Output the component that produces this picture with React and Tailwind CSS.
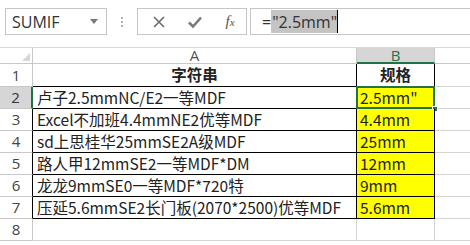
import React from 'react';

const rows = [
    { a: '卢子2.5mmNC/E2一等MDF', b: '2.5mm"' },
    { a: 'Excel不加班4.4mmNE2优等MDF', b: '4.4mm' },
    { a: 'sd上思桂华25mmSE2A级MDF', b: '25mm' },
    { a: '路人甲12mmSE2一等MDF*DM', b: '12mm' },
    { a: '龙龙9mmSE0一等MDF*720特', b: '9mm' },
    { a: '压延5.6mmSE2长门板(2070*2500)优等MDF', b: '5.6mm' },
];

const cjk = { fontFamily: '"Noto Sans CJK SC", "Noto Sans", sans-serif' };
const ui = { fontFamily: '"Open Sans", "Noto Sans", sans-serif' };

const App = () => {
    return (
        <div className="w-[470px] h-[245px] overflow-hidden bg-white text-[#222]">
            {/* Formula bar */}
            <div className="h-[47px] flex items-start pt-[8px] pl-[5px]" style={ui}>
                <div className="w-[102px] h-[27px] border border-[#c6c6c6] flex items-center pl-[6px] pr-[8px] text-[16px] text-[#333]">
                    <span className="flex-1">SUMIF</span>
                    <svg width="8" height="5" viewBox="0 0 8 5"><path d="M0 0h8L4 5z" fill="#7a7a7a" /></svg>
                </div>
                <div className="w-[30px] h-[27px] flex flex-col items-center justify-center gap-[2px]">
                    <span className="w-[2px] h-[2px] bg-[#b0b0b0]" />
                    <span className="w-[2px] h-[2px] bg-[#b0b0b0]" />
                    <span className="w-[2px] h-[2px] bg-[#b0b0b0]" />
                </div>
                <div className="w-[110px] h-[27px] border border-[#c6c6c6] flex items-center">
                    <div className="w-[38px] flex justify-center pl-[4px]">
                        <svg width="12" height="12" viewBox="0 0 12 12"><path d="M1 1l10 10M11 1L1 11" stroke="#6b6b6b" strokeWidth="1.6" /></svg>
                    </div>
                    <div className="w-[38px] flex justify-center">
                        <svg width="14" height="12" viewBox="0 0 14 12"><path d="M1 6.5l4 4L13 1.5" stroke="#7a7a7a" strokeWidth="2.6" fill="none" /></svg>
                    </div>
                    <div className="flex-1 flex justify-center items-baseline text-[15px] italic text-[#555]" style={{ fontFamily: '"Liberation Serif", serif' }}>
                        f<span className="text-[11px]">x</span>
                    </div>
                </div>
                <div className="ml-[3px] flex-1 h-[27px] border border-[#c6c6c6] border-r-0 flex items-center pl-[11px] text-[16px] text-[#333]">
                    <span>=</span>
                    <span className="bg-[#c4c4c4] h-[23px] flex items-center pl-[1px] border-r-[1.5px] border-black">"2.5mm"</span>
                </div>
            </div>

            {/* Sheet */}
            <div className="grid grid-cols-[33px_324px_78px_1fr] grid-rows-[17px_23px_repeat(7,22px)]">
                {/* column headers */}
                <div className="border-r border-b border-[#c8c8c8] border-t border-t-[#dadada] flex items-end justify-end pr-[2px] pb-[2px]">
                    <svg width="8" height="8" viewBox="0 0 8 8"><path d="M8 0v8H0z" fill="#d6d6d6" /></svg>
                </div>
                <div className="border-r border-b border-[#c8c8c8] border-t border-t-[#dadada] flex items-center justify-center text-[15px] text-[#555]" style={ui}>A</div>
                <div className="border-r border-b-2 border-r-[#c8c8c8] border-b-[#217346] border-t border-t-[#dadada] bg-[#d6d6d6] flex items-center justify-center text-[15px] text-[#217346]" style={ui}>B</div>
                <div className="border-b border-[#c8c8c8] border-t border-t-[#dadada]" />

                {/* row 1 */}
                <div className="border-r border-b border-[#c8c8c8] flex items-center justify-center text-[15px] text-[#444]" style={ui}>1</div>
                <div className="border-r border-b border-black flex items-center justify-center text-[15.5px] font-bold" style={cjk}>字符串</div>
                <div className="border-r border-b border-black flex items-center justify-center text-[15.5px] font-bold" style={cjk}>规格</div>
                <div className="border-b border-[#d4d4d4]" />

                {rows.map((r, i) => {
                    const sel = i === 0;
                    return (
                        <React.Fragment key={i}>
                            <div
                                className={sel
                                    ? 'border-r-2 border-r-[#217346] border-b border-b-[#c8c8c8] bg-[#d6d6d6] flex items-center justify-center text-[15px] text-[#333]'
                                    : 'border-r border-r-black border-b border-b-[#c8c8c8] flex items-center justify-center text-[15px] text-[#444]'}
                                style={ui}
                            >
                                {i + 2}
                            </div>
                            <div className="border-r border-b border-black flex items-center pl-[4px] text-[15.5px] whitespace-nowrap overflow-hidden" style={cjk}>
                                {r.a}
                            </div>
                            <div className="relative border-r border-b border-black bg-[#ffff00] flex items-center pl-[3px] text-[15.5px] whitespace-nowrap" style={cjk}>
                                {r.b}
                                {sel && (
                                    <>
                                        <div className="absolute -left-[1px] -top-[1px] -right-[1px] -bottom-[1px] border-2 border-[#217346]" />
                                        <div className="absolute -right-[4px] -bottom-[4px] w-[6px] h-[6px] bg-[#217346] border border-white" />
                                    </>
                                )}
                            </div>
                            <div className="border-b border-[#d4d4d4]" />
                        </React.Fragment>
                    );
                })}

                {/* row 8 */}
                <div className="border-r border-b border-[#c8c8c8] flex items-center justify-center text-[15px] text-[#444]" style={ui}>8</div>
                <div className="border-r border-b border-[#d4d4d4]" />
                <div className="border-r border-b border-[#d4d4d4]" />
                <div className="border-b border-[#d4d4d4]" />
            </div>
        </div>
    );
};

export default App;
